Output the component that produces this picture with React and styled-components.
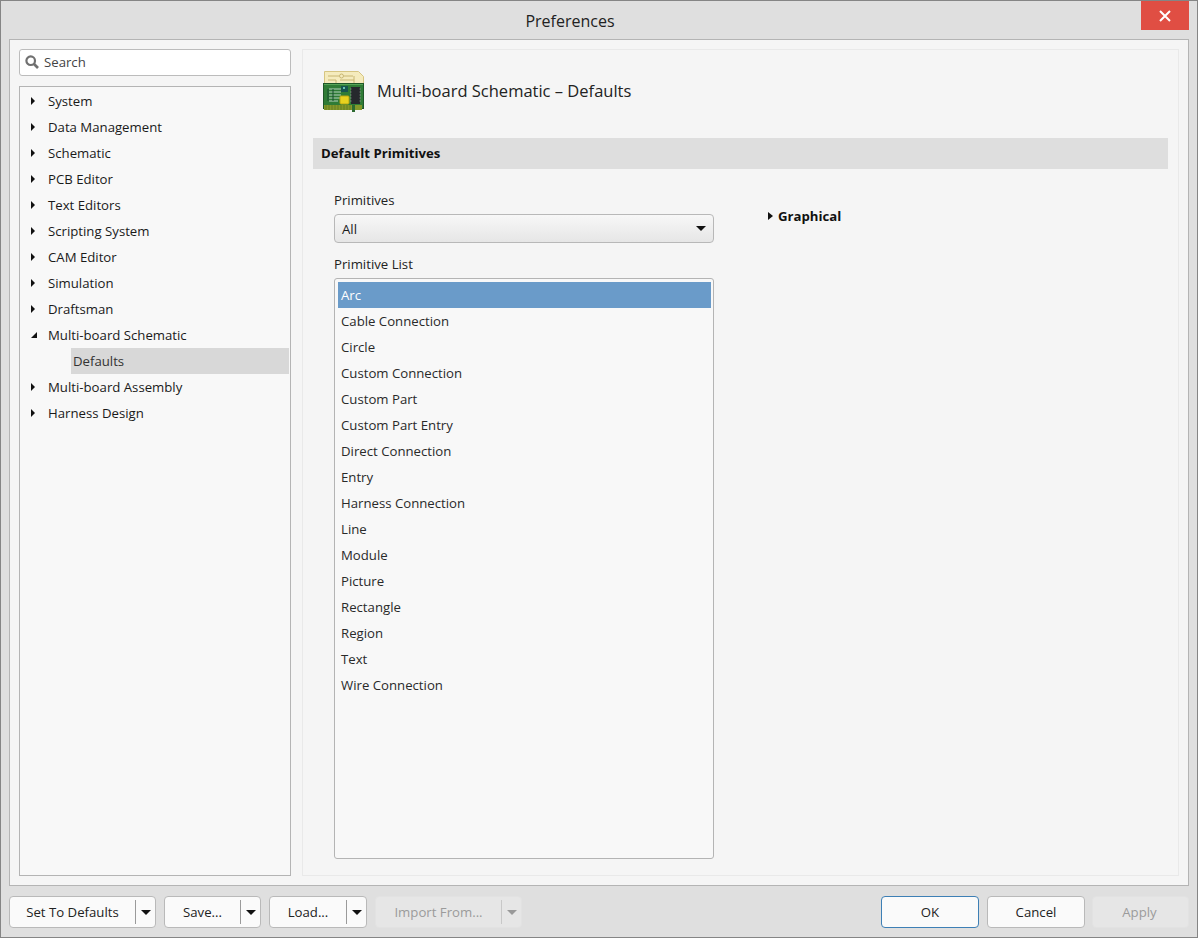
import React from "react";
import styled, { createGlobalStyle } from "styled-components";

const Global = createGlobalStyle`
  html, body { margin: 0; padding: 0; background: #dfdfdf; }
  * { box-sizing: border-box; }
`;

const Win = styled.div`
  width: 1198px; height: 938px; display: flex; flex-direction: column;
  background: #dfdfdf; border: 1px solid #858585; position: relative;
  font-family: "Open Sans", "Noto Sans", sans-serif; font-size: 13.2px; color: #1a1a1a;
  -webkit-font-smoothing: antialiased;
`;
const TitleBar = styled.div`
  height: 38px; flex: none; display: flex; align-items: center; justify-content: center;
  font-size: 16px; color: #222; padding: 2px 58px 0 0;
`;
const CloseBtn = styled.div`
  position: absolute; top: 0; right: 8px; width: 48px; height: 29px; background: #e04e43;
  display: flex; align-items: center; justify-content: center;
`;
const Body = styled.div`
  margin: 0 8px; height: 847px; flex: none; background: #f5f5f5; border: 1px solid #b4b4b4;
  padding: 9px; display: grid; grid-template-columns: 272px 877px; column-gap: 11px;
`;
const Left = styled.div`display: flex; flex-direction: column; gap: 10px; min-height: 0;`;
const SearchBox = styled.div`
  height: 27px; flex: none; background: #fff; border: 1px solid #bcbcbc; border-radius: 3px;
  display: flex; align-items: center; gap: 5px; padding: 0 0 2px 5px; color: #444;
`;
const Tree = styled.div`
  flex: 1; background: #f8f8f8; border: 1px solid #b4b4b4; padding: 1px 1px 0 0;
`;
const TreeRow = styled.div`
  height: 26px; display: flex; align-items: center; padding-left: 11px;
`;
const ArrowSlot = styled.span`width: 17px; flex: none; display: flex; align-items: center;`;
const SubRow = styled.div`
  height: 26px; margin-left: 51px; background: #d8d8d8; display: flex; align-items: center; padding-left: 2px; color: #333;
`;
const Right = styled.div`
  background: #f5f5f5; border: 1px solid #e9e9e9; padding: 0 10px; display: flex; flex-direction: column;
`;
const Head = styled.div`
  height: 88px; flex: none; display: flex; align-items: center; gap: 12px; padding: 0 0 6px 10px;
  font-size: 16.5px; color: #222;
`;
const HeadTitle = styled.span`padding-bottom: 2px;`;
const SectionBar = styled.div`
  height: 31px; flex: none; background: #dedede; display: flex; align-items: center; padding: 0 0 2px 8px;
  font-weight: 700; color: #111;
`;
const Columns = styled.div`
  flex: 1; display: flex; padding: 21px 0 16px 21px; min-height: 0;
`;
const FormCol = styled.div`width: 380px; display: flex; flex-direction: column;`;
const FieldLabel = styled.div`height: 24px; flex: none; line-height: 20px; color: #222;`;
const Select = styled.div`
  height: 29px; flex: none; margin-bottom: 11px; border: 1px solid #b8b8b8; border-radius: 4px;
  background: linear-gradient(#f7f7f7, #e6e6e6); display: flex; align-items: center; justify-content: space-between;
  padding: 0 7px;
`;
const List = styled.div`
  flex: 1; background: #f8f8f8; border: 1px solid #b4b4b4; border-radius: 3px; padding: 3px 2px 3px 3px;
`;
const Item = styled.div`
  height: 26px; display: flex; align-items: center; padding-left: 3px;
  background: ${p => (p.$active ? "#6a9bc9" : "transparent")};
  color: ${p => (p.$active ? "#fff" : "#2a2a2a")};
`;
const Graphical = styled.div`
  margin: 16px 0 0 53px; height: 20px; display: flex; align-items: center; gap: 5px; font-weight: 700; color: #111;
`;
const Footer = styled.div`
  flex: 1; display: flex; align-items: flex-start; justify-content: space-between; padding: 10px 8px 0;
`;
const Group = styled.div`display: flex; gap: 8px;`;
const Btn = styled.div`
  width: ${p => p.$w}px; height: 32px; border-radius: 4px; display: flex; align-items: center; justify-content: center;
  background: ${p => (p.$off ? "#e6e6e6" : "#fafafa")};
  border: 1px solid ${p => (p.$primary ? "#3d7fb5" : p.$off ? "#e2e2e2" : "#b9b9b9")};
  color: ${p => (p.$off ? "#9b9b9b" : "#222")};
`;
const ApplyBtn = styled(Btn)`margin-left: -1px; padding-right: 2px;`;
const SplitBtn = styled(Btn)`justify-content: flex-start;`;
const SplitLabel = styled.span`flex: 1; text-align: center;`;
const SplitArrow = styled.span`
  width: 20px; height: 24px; flex: none; border-left: 1px solid ${p => (p.$off ? "#c8c8c8" : "#9a9a9a")};
  display: flex; align-items: center; justify-content: center;
`;

const Caret = ({ color = "#111", w = 10, h = 5 }) => (
  <svg width={w} height={h} viewBox="0 0 10 5"><path d="M0 0h10L5 5z" fill={color} /></svg>
);
const Tri = ({ w = 4, x = 0 }) => (
  <svg width={w + x} height="8" viewBox={`${-x} 0 ${w + x} 8`}><path d={`M0 0l${w} 4-${w} 4z`} fill="#111" /></svg>
);
const Open = () => (
  <svg width="6" height="6" viewBox="0 0 6 6"><path d="M6 0v6H0z" fill="#111" /></svg>
);

const Board = () => (
  <svg width="42" height="42" viewBox="0 0 42 42">
    <path d="M1.5 1.5h34l5 5v20h-39z" fill="#f5ebbd" stroke="#d6c582" />
    <path d="M5 6h11m5 0h9M5 10h8v3M17 10h14v3M31 6v4" stroke="#c8b673" fill="none" />
    <circle cx="18.5" cy="6" r="2" fill="#f5ebbd" stroke="#c8b673" />
    <rect x="0.5" y="13.5" width="40" height="25" fill="#2f7c36" stroke="#1f5628" />
    <path d="M1 14.5h39" stroke="#57a457" />
    <rect x="1" y="35" width="28" height="5" fill="#84992a" />
    <path d="M3 35v5M6 35v5M9 35v5M12 35v5M15 35v5M18 35v5M21 35v5M24 35v5M27 35v5" stroke="#667d22" />
    <rect x="29" y="35" width="3" height="7" fill="#2c6a30" />
    <rect x="32" y="35" width="7" height="5" fill="#84992a" />
    <path d="M6 19h12M6 22h12M6 25h12M6 28h12M6 31h9" stroke="#b6d2bd" />
    <path d="M5 19v12M10 19v12" stroke="#174a2c" />
    <rect x="18" y="16" width="7" height="6" fill="#17554f" />
    <rect x="20" y="17" width="2" height="2" fill="#69c0b0" />
    <rect x="17" y="26" width="9" height="8" rx="1" fill="#e8d21f" stroke="#b9a514" />
    <rect x="28" y="17" width="9" height="17" fill="#26292d" />
    <path d="M27 19h11M27 22h11M27 25h11M27 28h11M27 31h11" stroke="#7e8a80" strokeDasharray="1.5 8" />
  </svg>
);

const tree = ["System", "Data Management", "Schematic", "PCB Editor", "Text Editors", "Scripting System", "CAM Editor", "Simulation", "Draftsman"];
const items = ["Arc", "Cable Connection", "Circle", "Custom Connection", "Custom Part", "Custom Part Entry", "Direct Connection", "Entry", "Harness Connection", "Line", "Module", "Picture", "Rectangle", "Region", "Text", "Wire Connection"];

export default function App() {
  return (
    <Win>
      <Global />
      <TitleBar>Preferences</TitleBar>
      <CloseBtn>
        <svg width="12" height="12" viewBox="0 0 12 12"><path d="M1 1l10 10M11 1L1 11" stroke="#fff" strokeWidth="2" /></svg>
      </CloseBtn>
      <Body>
        <Left>
          <SearchBox>
            <svg width="14" height="14" viewBox="0 0 14 14"><circle cx="5.7" cy="5.7" r="4.3" fill="none" stroke="#707070" strokeWidth="2.2" /><path d="M9 9l4 4" stroke="#707070" strokeWidth="2.6" /></svg>
            Search
          </SearchBox>
          <Tree>
            {tree.map(t => <TreeRow key={t}><ArrowSlot><Tri /></ArrowSlot>{t}</TreeRow>)}
            <TreeRow><ArrowSlot><Open /></ArrowSlot>Multi-board Schematic</TreeRow>
            <SubRow>Defaults</SubRow>
            <TreeRow><ArrowSlot><Tri /></ArrowSlot>Multi-board Assembly</TreeRow>
            <TreeRow><ArrowSlot><Tri /></ArrowSlot>Harness Design</TreeRow>
          </Tree>
        </Left>
        <Right>
          <Head><Board /><HeadTitle>Multi-board Schematic – Defaults</HeadTitle></Head>
          <SectionBar>Default Primitives</SectionBar>
          <Columns>
            <FormCol>
              <FieldLabel>Primitives</FieldLabel>
              <Select>All<Caret /></Select>
              <FieldLabel>Primitive List</FieldLabel>
              <List>
                {items.map((t, i) => <Item key={t} $active={i === 0}>{t}</Item>)}
              </List>
            </FormCol>
            <Graphical><Tri w={5} x={1} />Graphical</Graphical>
          </Columns>
        </Right>
      </Body>
      <Footer>
        <Group>
          <SplitBtn $w={147}><SplitLabel>Set To Defaults</SplitLabel><SplitArrow><Caret /></SplitArrow></SplitBtn>
          <SplitBtn $w={97}><SplitLabel>Save...</SplitLabel><SplitArrow><Caret /></SplitArrow></SplitBtn>
          <SplitBtn $w={98}><SplitLabel>Load...</SplitLabel><SplitArrow><Caret /></SplitArrow></SplitBtn>
          <SplitBtn $w={147} $off><SplitLabel>Import From...</SplitLabel><SplitArrow $off><Caret color="#999" /></SplitArrow></SplitBtn>
        </Group>
        <Group>
          <Btn $w={98} $primary>OK</Btn>
          <Btn $w={98}>Cancel</Btn>
          <ApplyBtn $w={97} $off>Apply</ApplyBtn>
        </Group>
      </Footer>
    </Win>
  );
}
